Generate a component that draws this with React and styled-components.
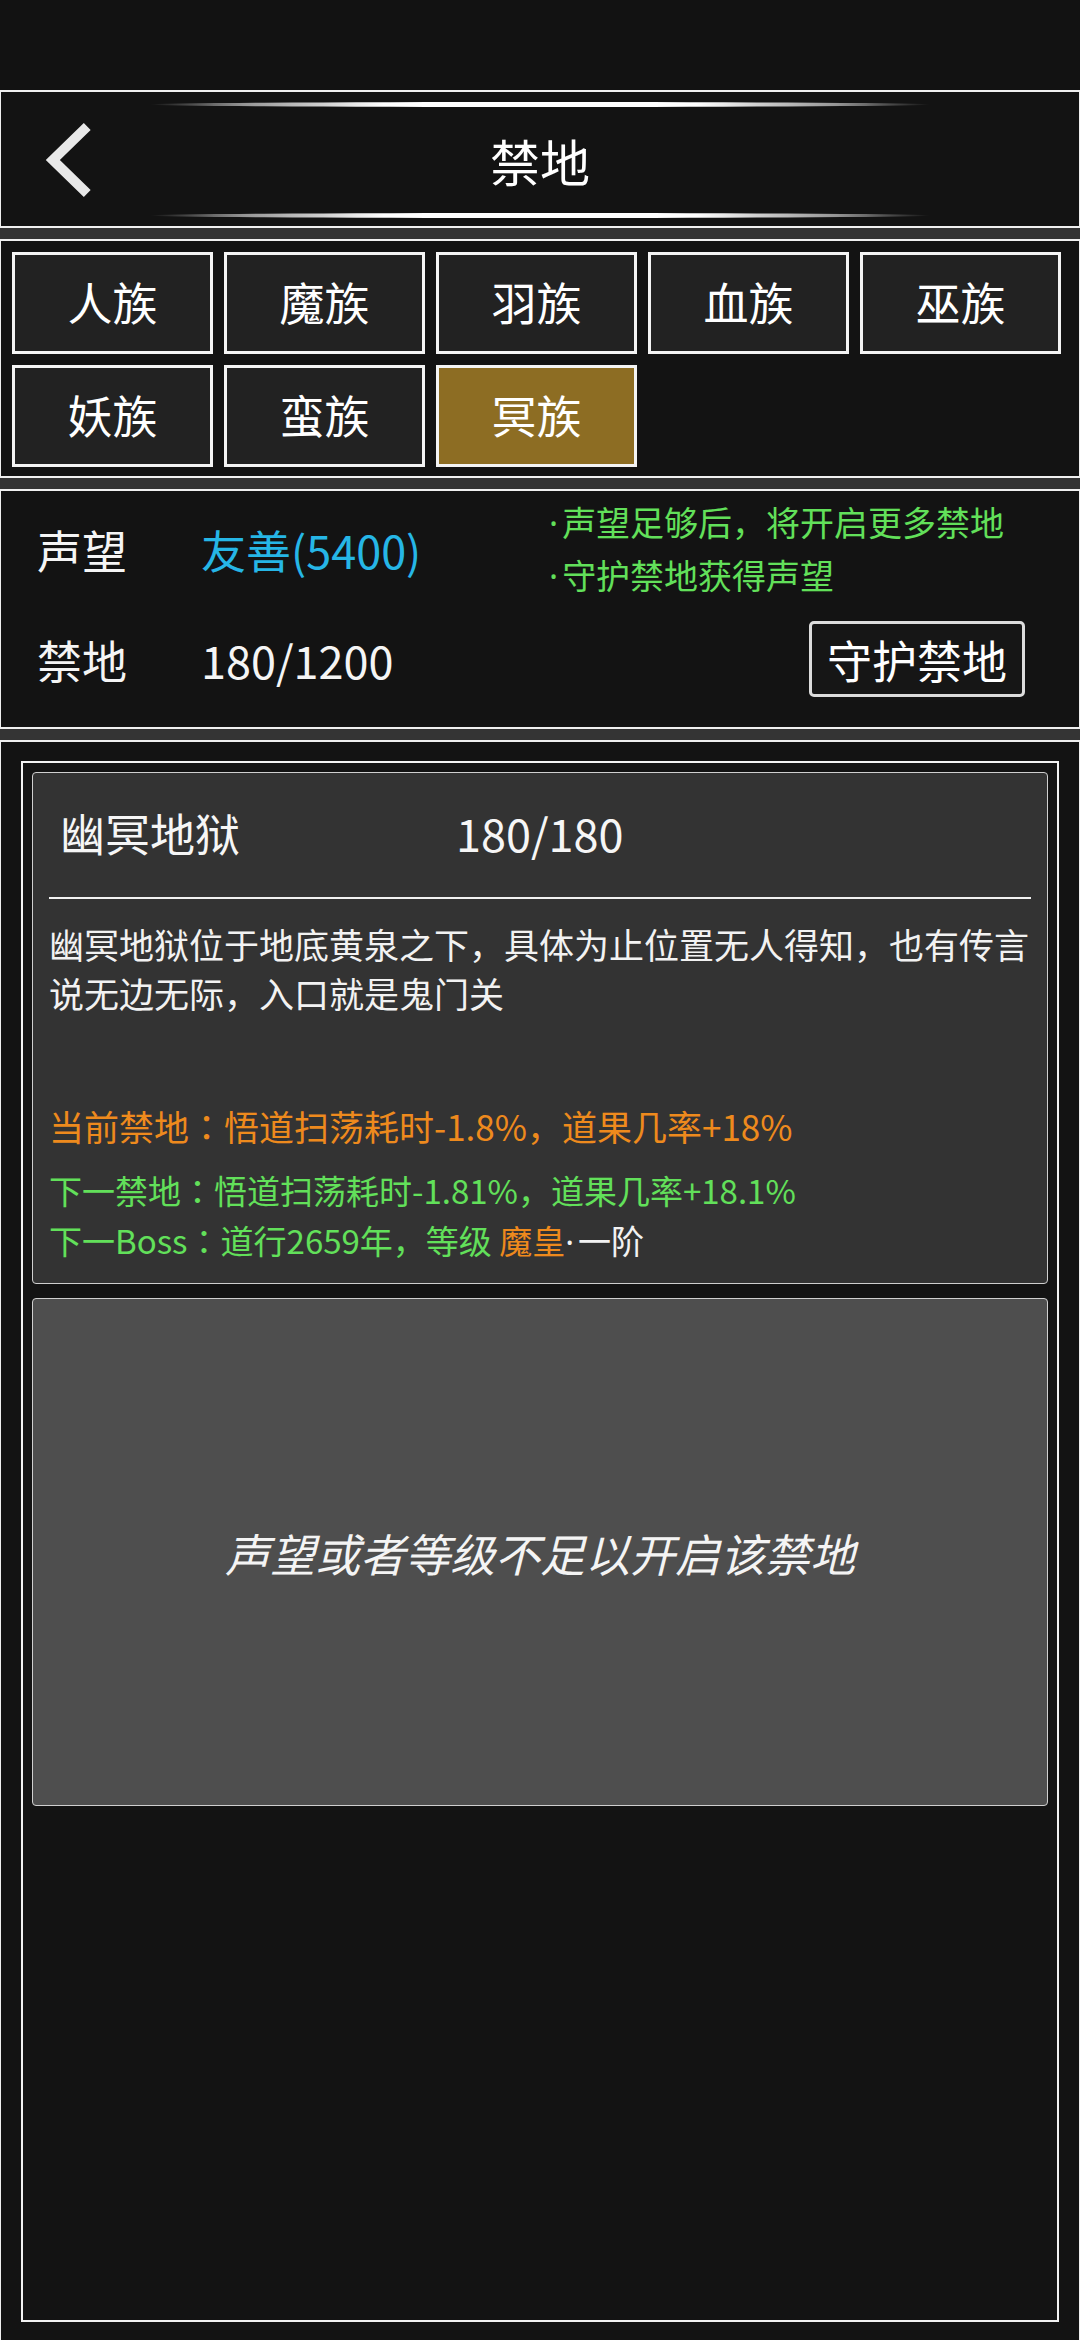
import React, { useState } from "react";
import styled, { createGlobalStyle } from "styled-components";

const GlobalStyle = createGlobalStyle`
  html, body {
    margin: 0;
    padding: 0;
    background: #121212;
  }
  body {
    font-family: "Noto Sans CJK SC", "Noto Sans", sans-serif;
    color: #f4f4f4;
  }
  * {
    box-sizing: border-box;
  }
`;

const races = ["人族", "魔族", "羽族", "血族", "巫族", "妖族", "蛮族", "冥族"];

const Page = styled.div`
  min-height: 2340px;
  display: flex;
  flex-direction: column;
  background: #343434;
`;

const StatusBar = styled.div`
  height: 90px;
  background: #121212;
`;

const Section = styled.section`
  background: #131313;
  border: 2px solid #f0f0f0;
  border-left-width: 1px;
  border-right-width: 1px;
  margin-top: ${(p) => (p.$flush ? 0 : 11)}px;
`;

const Header = styled(Section)`
  height: 138px;
  display: grid;
  grid-template-columns: 100px 1fr 100px;
`;

const BackCell = styled.div`
  display: flex;
  align-items: center;
  padding-left: 41px;
`;

const HeaderCenter = styled.div`
  display: flex;
  flex-direction: column;
  align-items: center;
  justify-content: space-between;
  padding: 10px 0 8px;
`;

const GlowLine = styled.div`
  width: 780px;
  height: 5px;
  border-radius: 50%;
  background: linear-gradient(
    90deg,
    rgba(255, 255, 255, 0) 0%,
    rgba(255, 255, 255, 0.55) 12%,
    #ffffff 30%,
    #ffffff 70%,
    rgba(255, 255, 255, 0.55) 88%,
    rgba(255, 255, 255, 0) 100%
  );
`;

const Title = styled.h1`
  margin: 0;
  font-size: 50px;
  font-weight: 400;
  line-height: 1;
  color: #ffffff;
`;

const TabsGrid = styled(Section)`
  display: grid;
  grid-template-columns: repeat(5, 201px);
  grid-auto-rows: 102px;
  gap: 11px;
  padding: 11px 0 9px 11px;
`;

const TabButton = styled.button`
  display: flex;
  align-items: center;
  justify-content: center;
  border: 3px solid #f4f4f4;
  background: ${(p) => (p.$active ? "#8d6d23" : "#222222")};
  color: #ffffff;
  font-family: inherit;
  font-size: 45px;
  padding: 0 0 4px;
  cursor: pointer;
`;

const InfoPanel = styled(Section)`
  display: grid;
  grid-template-columns: 164px 1fr 476px;
  grid-template-rows: 116px 104px;
  padding: 0 54px 16px 36px;
  align-items: center;
`;

const Label = styled.div`
  font-size: 45px;
  color: #f5f5f5;
`;

const Value = styled.div`
  font-size: 45px;
  color: ${(p) => p.$color || "#f5f5f5"};
`;

const Notes = styled.div`
  font-size: 34px;
  line-height: 51px;
  color: #62e05a;
`;

const Dot = styled.span`
  font-family: "Noto Sans", "DejaVu Sans", sans-serif;
  margin-right: 4px;
`;

const Colon = styled.span`
  font-family: "Noto Sans CJK JP", "Noto Sans CJK SC", sans-serif;
`;

const GuardButton = styled.button`
  justify-self: end;
  width: 216px;
  height: 76px;
  border: 3px solid #dcdcdc;
  border-radius: 5px;
  background: #161616;
  color: #ffffff;
  font-family: inherit;
  font-size: 45px;
  padding: 0;
`;

const MainSection = styled(Section)`
  flex: 1;
  display: flex;
  flex-direction: column;
  border-bottom: 0;
  padding: 19px 20px 18px;
`;

const InnerFrame = styled.div`
  flex: 1;
  display: flex;
  flex-direction: column;
  gap: 14px;
  padding: 9px;
  border: 2px solid #f2f2f2;
  background: #131313;
`;

const Card = styled.div`
  border: 1.5px solid #cfcfcf;
  border-radius: 4px;
  background: #333333;
  padding: 0 16px 16px;
`;

const TitleRow = styled.div`
  height: 118px;
  display: flex;
  align-items: center;
  padding-left: 11px;
  font-size: 45px;
  color: #f6f6f6;
`;

const TitleName = styled.span`
  width: 396px;
`;

const Divider = styled.div`
  height: 2px;
  margin-top: 6px;
  background: #f2f2f2;
`;

const Desc = styled.p`
  margin: 20px 0 0;
  font-size: 35px;
  line-height: 49px;
  color: #f2f2f2;
`;

const Effect = styled.div`
  font-size: ${(p) => p.$size || 35}px;
  line-height: 50px;
  color: ${(p) => p.$color};
  margin-top: ${(p) => p.$gap || 0}px;
`;

const Tint = styled.span`
  color: ${(p) => p.$color};
`;

const LockedCard = styled.div`
  height: 508px;
  display: flex;
  align-items: center;
  justify-content: center;
  border: 1.5px solid #cfcfcf;
  border-radius: 4px;
  background: #4e4e4e;
  font-size: 45px;
  font-style: italic;
  color: #f4f4f4;
`;

const ORANGE = "#ee8a1d";
const GREEN = "#62e05a";

const BackIcon = () => (
  <svg width="60" height="80" viewBox="0 0 60 80">
    <path
      d="M46 7 L11 41 L46 75"
      fill="none"
      stroke="#e8e8e8"
      strokeWidth="10"
      strokeLinejoin="miter"
    />
  </svg>
);

const App = () => {
  const [active, setActive] = useState(7);
  return (
    <Page>
      <GlobalStyle />
      <StatusBar />
      <Header $flush>
        <BackCell>
          <BackIcon />
        </BackCell>
        <HeaderCenter>
          <GlowLine />
          <Title>禁地</Title>
          <GlowLine />
        </HeaderCenter>
        <div />
      </Header>

      <TabsGrid>
        {races.map((race, index) => (
          <TabButton
            key={race}
            $active={index === active}
            onClick={() => setActive(index)}
          >
            {race}
          </TabButton>
        ))}
      </TabsGrid>

      <InfoPanel>
        <Label>声望</Label>
        <Value $color="#26b6e6">友善(5400)</Value>
        <Notes>
          <div>
            <Dot>·</Dot>声望足够后，将开启更多禁地
          </div>
          <div>
            <Dot>·</Dot>守护禁地获得声望
          </div>
        </Notes>
        <Label>禁地</Label>
        <Value>180/1200</Value>
        <GuardButton>守护禁地</GuardButton>
      </InfoPanel>

      <MainSection>
        <InnerFrame>
          <Card>
            <TitleRow>
              <TitleName>幽冥地狱</TitleName>
              <span>180/180</span>
            </TitleRow>
            <Divider />
            <Desc>
              幽冥地狱位于地底黄泉之下，具体为止位置无人得知，也有传言说无边无际，入口就是鬼门关
            </Desc>
            <Effect $color={ORANGE} $gap={84}>
              当前禁地<Colon>：</Colon>悟道扫荡耗时-1.8%，道果几率+18%
            </Effect>
            <Effect $color={GREEN} $size={33} $gap={14}>
              下一禁地<Colon>：</Colon>悟道扫荡耗时-1.81%，道果几率+18.1%
            </Effect>
            <Effect $color={GREEN} $size={33}>
              下一Boss<Colon>：</Colon>道行2659年，等级{" "}
              <Tint $color={ORANGE}>魔皇</Tint>
              <Tint $color="#f2f2f2">
                <Dot>·</Dot>一阶
              </Tint>
            </Effect>
          </Card>
          <LockedCard>声望或者等级不足以开启该禁地</LockedCard>
        </InnerFrame>
      </MainSection>
    </Page>
  );
};

export default App;
